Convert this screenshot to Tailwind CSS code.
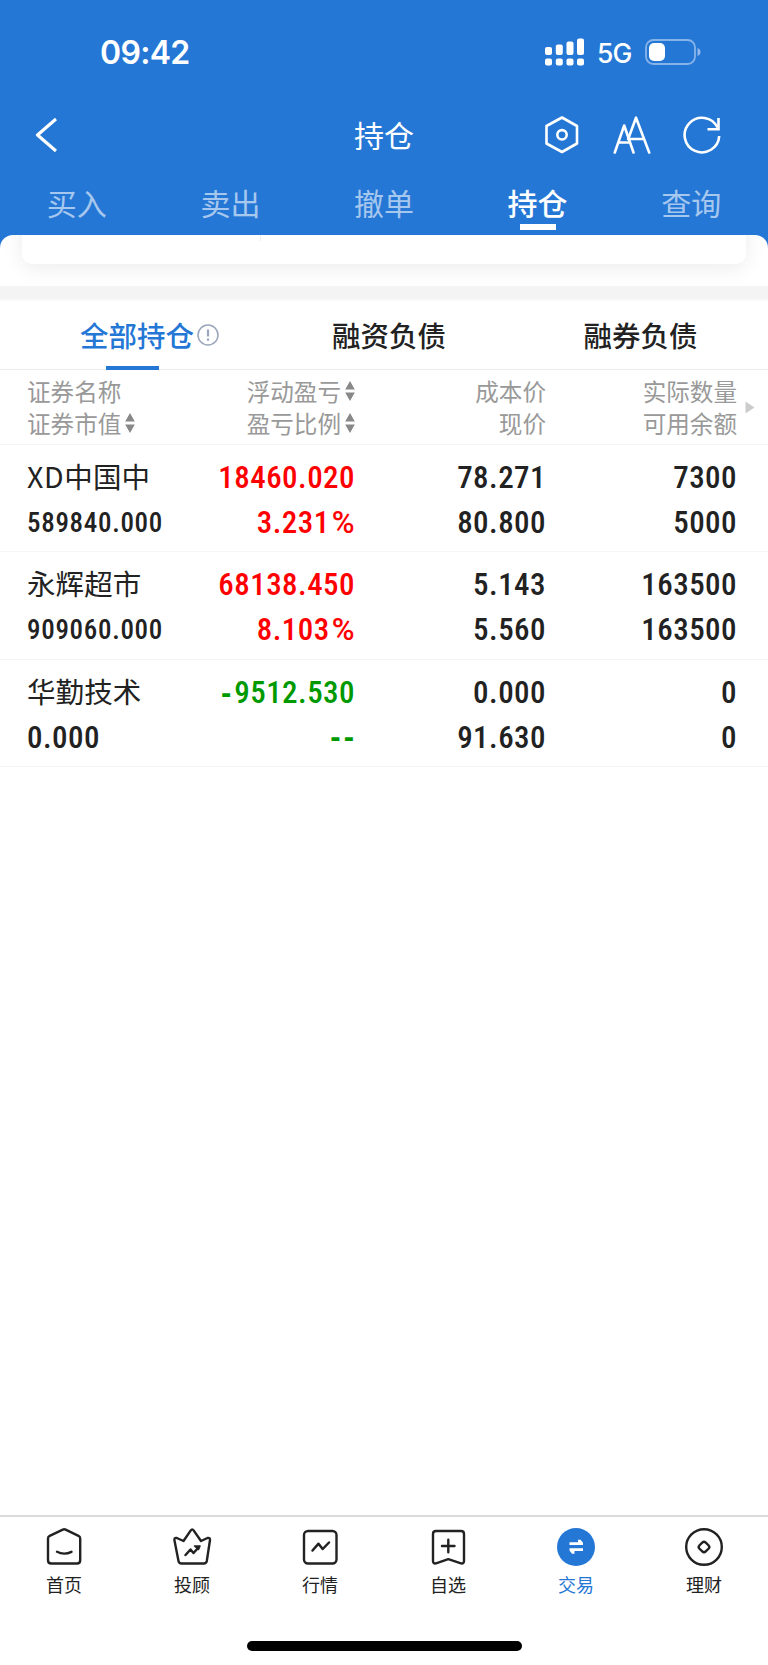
<!DOCTYPE html>
<html lang="zh-CN">
<head>
  <meta charset="UTF-8">
  <meta name="viewport" content="width=device-width, initial-scale=1.0">
  <title>持仓</title>
  <script src="https://cdn.jsdelivr.net/npm/@tailwindcss/browser@4"></script>
</head>
<body class="bg-[#2577d6] font-['Noto_Sans_CJK_SC',sans-serif] text-[#222]">
<div class="w-[768px] h-[1665px] flex flex-col overflow-hidden">

  <!-- Header -->
  <header class="h-[235px] shrink-0 text-white flex flex-col">
    <div class="h-[104px] shrink-0 pt-px pl-[100px] pr-[67px] flex items-center justify-between font-[Inter,sans-serif]">
      <span class="text-[32px] leading-none font-semibold tracking-[-0.7px]">09:42</span>
      <div class="-mt-[2px] flex items-center">
        <svg class="w-[39px] h-[28px]" viewBox="0 0 39 28" fill="currentColor">
          <rect x="0" y="9" width="7" height="8" rx="2"/>
          <rect x="10.8" y="6.5" width="7" height="10.5" rx="2"/>
          <rect x="21.5" y="3.5" width="7" height="13.5" rx="2"/>
          <rect x="32" y="0.5" width="7" height="16.5" rx="2"/>
          <rect x="0" y="20.5" width="7" height="7" rx="2"/>
          <rect x="10.8" y="20.5" width="7" height="7" rx="2"/>
          <rect x="21.5" y="20.5" width="7" height="7" rx="2"/>
          <rect x="32" y="20.5" width="7" height="7" rx="2"/>
        </svg>
        <span class="ml-[13px] w-[35px] pt-[3px] text-[26.5px] leading-none font-medium tracking-[-1px] whitespace-nowrap">5G</span>
        <svg class="ml-[13px] w-[56px] h-[26px]" viewBox="0 0 56 26" fill="none">
          <rect x="1" y="1" width="49" height="24" rx="7.5" stroke="#fff" stroke-opacity=".45" stroke-width="1.8"/>
          <rect x="4" y="4" width="16" height="18" rx="5" fill="#fff"/>
          <path d="M52.5 9q3 1.200 3 4t-3 4z" fill="#fff" fill-opacity=".5"/>
        </svg>
      </div>
    </div>

    <div class="h-[62px] shrink-0 px-[35px] grid grid-cols-[1fr_auto_1fr] items-center">
      <svg class="w-[22px] h-[36px]" viewBox="0 0 22 36" fill="none" stroke="#fff" stroke-width="3.2" stroke-linejoin="round"><path d="M21 2L2.500 18 21 34"/></svg>
      <h1 class="-mt-[2px] text-[30px] leading-none">持仓</h1>
      <div class="flex items-center justify-end pr-[12px]">
        <svg class="w-[34px] h-[38px]" viewBox="0 0 34 38" fill="none" stroke="#fff" stroke-width="2.600" stroke-linejoin="round">
          <path d="M17 1.500L32 10v17.500L17 36 1.500 27.500V10z"/>
          <circle cx="17" cy="18.800" r="4.700"/>
        </svg>
        <svg class="ml-[34px] w-[38px] h-[38px]" viewBox="0 0 38 38" fill="none" stroke="#fff" stroke-width="2.600" stroke-linecap="round" stroke-linejoin="round">
          <path d="M1.800 36.500L11.200 9.500l9.300 27M5.500 26.500h11.600"/>
          <path d="M15.200 23L23 1.700 36.200 36.500M16.600 23h14"/>
        </svg>
        <svg class="ml-[32px] w-[38px] h-[38px]" viewBox="0 0 38 38" fill="none" stroke="#fff" stroke-width="2.600">
          <path d="M36.200 20A17.300 17.300 0 1 1 34.500 11.500"/>
          <path d="M35.500 2v11.200H24.500"/>
        </svg>
      </div>
    </div>

    <nav class="h-[69px] shrink-0 grid grid-cols-5 text-center text-[30px] leading-[73px] text-white/60">
      <a>买入</a>
      <a>卖出</a>
      <a>撤单</a>
      <a class="relative text-white font-medium">持仓<span class="absolute left-[59px] top-[58px] w-9 h-[6px] bg-white"></span></a>
      <a>查询</a>
    </nav>
  </header>

  <main class="flex-1 bg-white rounded-t-[13px] overflow-hidden flex flex-col">
    <!-- Lower edge of the scrolled summary card -->
    <div class="h-[51px] shrink-0 px-[22px] overflow-hidden">
      <div class="-mt-[40px] h-[69px] rounded-[10px] bg-white shadow-[0_4px_20px_rgba(0,0,0,0.08)] pl-[238px]">
        <div class="w-px h-[46px] bg-[#eee]"></div>
      </div>
    </div>
    <div class="h-[15px] shrink-0 bg-[#f4f4f4] border-b-2 border-[#f9f9f9]"></div>

    <!-- Position tabs -->
    <div class="h-[69px] shrink-0 flex border-b border-[#ececec] text-[28.5px] leading-[67px] font-medium">
      <div class="relative w-[264px] pl-[80px] pb-px flex items-center text-[#2577d6]">
        全部持仓
        <svg class="ml-[3px] w-[22px] h-[22px]" viewBox="0 0 22 22" fill="none" stroke="#9aa4bb">
          <circle cx="11" cy="11" r="10" stroke-width="1.500"/>
          <path d="M11 5.500v7M11 14.500v2.200" stroke-width="2.200"/>
        </svg>
        <span class="absolute left-[106px] bottom-[-1px] w-[53px] h-[4px] bg-[#2577d6]"></span>
      </div>
      <div class="w-[250px] text-center">融资负债</div>
      <div class="w-[253px] text-center">融券负债</div>
    </div>

    <!-- Column titles -->
    <div class="relative h-[75px] shrink-0 pl-[27px] pt-[5px] flex border-b border-[#f5f5f5] text-[23.6px] leading-[32px] text-[#999]">
      <div class="w-[150px]">
        <div>证券名称</div>
        <div class="flex items-center gap-[4px]">证券市值
          <svg class="w-[10px] h-[20px]" viewBox="0 0 10 20" fill="#888"><path d="M5 0l4.800 8.500H.2zM5 20L.2 11.500h9.600z"/></svg>
        </div>
      </div>
      <div class="w-[178px]">
        <div class="flex items-center justify-end gap-[4px]">浮动盈亏
          <svg class="w-[10px] h-[20px]" viewBox="0 0 10 20" fill="#888"><path d="M5 0l4.800 8.500H.2zM5 20L.2 11.500h9.600z"/></svg>
        </div>
        <div class="flex items-center justify-end gap-[4px]">盈亏比例
          <svg class="w-[10px] h-[20px]" viewBox="0 0 10 20" fill="#888"><path d="M5 0l4.800 8.500H.2zM5 20L.2 11.500h9.600z"/></svg>
        </div>
      </div>
      <div class="w-[191px] text-right">
        <div>成本价</div>
        <div>现价</div>
      </div>
      <div class="w-[191px] text-right">
        <div>实际数量</div>
        <div>可用余额</div>
      </div>
      <svg class="absolute left-[745px] top-[31px] w-[10px] h-[13px]" viewBox="0 0 10 13" fill="#ccc"><path d="M.5.500l9 6-9 6z"/></svg>
    </div>

    <!-- Positions -->
    <div class="flex-1 font-[Roboto,'Noto_Sans_CJK_SC',sans-serif] font-medium [font-stretch:75%] text-[31px] tracking-[0.45px] leading-[45px]">
      <div class="h-[107.250px] pl-[27px] pt-[10px] flex border-b border-[#f5f5f5]">
        <div class="w-[150px] whitespace-nowrap">
          <div class="-mt-[2px] mb-[2px] font-['Noto_Sans_CJK_SC',sans-serif] font-normal text-[28.5px] tracking-[0.1px]"><span class="tracking-[0.7px]">XD</span>中国中</div>
          <div class="pt-px h-[45px] text-[27px] tracking-[0.7px]">589840.000</div>
        </div>
        <div class="w-[178px] text-right text-[#f00]">
          <div>18460.020</div>
          <div>3.231<span class="ml-[2px] [font-stretch:100%]">%</span></div>
        </div>
        <div class="w-[191px] text-right">
          <div>78.271</div>
          <div>80.800</div>
        </div>
        <div class="w-[191px] text-right">
          <div>7300</div>
          <div>5000</div>
        </div>
      </div>
      <div class="h-[107.250px] pl-[27px] pt-[10px] flex border-b border-[#f5f5f5]">
        <div class="w-[150px] whitespace-nowrap">
          <div class="-mt-[2px] mb-[2px] font-['Noto_Sans_CJK_SC',sans-serif] font-normal text-[28.5px] tracking-[0.1px]">永辉超市</div>
          <div class="pt-px h-[45px] text-[27px] tracking-[0.7px]">909060.000</div>
        </div>
        <div class="w-[178px] text-right text-[#f00]">
          <div>68138.450</div>
          <div>8.103<span class="ml-[2px] [font-stretch:100%]">%</span></div>
        </div>
        <div class="w-[191px] text-right">
          <div>5.143</div>
          <div>5.560</div>
        </div>
        <div class="w-[191px] text-right">
          <div>163500</div>
          <div>163500</div>
        </div>
      </div>
      <div class="h-[107.250px] pl-[27px] pt-[10px] flex border-b border-[#f5f5f5]">
        <div class="w-[150px] whitespace-nowrap">
          <div class="-mt-[2px] mb-[2px] font-['Noto_Sans_CJK_SC',sans-serif] font-normal text-[28.5px] tracking-[0.1px]">华勤技术</div>
          <div>0.000</div>
        </div>
        <div class="w-[178px] text-right text-[#090]">
          <div class="h-[45px]"><span class="font-['Liberation_Sans',sans-serif] font-bold tracking-[3px]">-</span>9512.530</div>
          <div class="h-[45px] font-['Liberation_Sans',sans-serif] font-bold tracking-[3px] -mr-[2px] -mt-px">--</div>
        </div>
        <div class="w-[191px] text-right">
          <div>0.000</div>
          <div>91.630</div>
        </div>
        <div class="w-[191px] text-right">
          <div>0</div>
          <div>0</div>
        </div>
      </div>
    </div>

    <!-- Bottom nav -->
    <footer class="h-[150px] shrink-0 border-t-2 border-[#d9dada] flex flex-col items-center">
      <nav class="w-full grid grid-cols-6 pt-[10px] text-[18px] leading-[34px]">
        <a class="flex flex-col items-center">
          <svg class="w-[40px] h-[40px]" viewBox="0 0 40 40" fill="none" stroke="#222" stroke-width="2.400" stroke-linecap="round" stroke-linejoin="round">
            <path d="M18.800 2.600q1.400-.700 2.800 0L34.500 8.800q1.700.9 1.700 2.700v21.700q0 3.300-3.300 3.300H7.300Q4 36.500 4 33.200V11.500q0-1.800 1.700-2.700z"/>
            <path d="M13 24.800q7 3.600 14.500 0"/>
          </svg>
          首页
        </a>
        <a class="flex flex-col items-center">
          <svg class="w-[40px] h-[40px]" viewBox="0 0 40 40" fill="none" stroke="#222" stroke-width="2.400" stroke-linecap="round" stroke-linejoin="round">
            <path d="M18.800 3.400q1.400-2 2.800 0L29 14l6.500-3q2.700-.6 2.500 2l-3.200 21q-.5 2.500-3 2.500H9.500q-2.500 0-3-2.500L2.400 13q-.2-2.600 2.400-2L11.500 14z"/>
            <path d="M13.500 28l5-5.500 3 3.500 5.500-6" stroke-width="2.500"/>
            <path d="M22.500 19h5.500l-1.500 3.500z" fill="#222" stroke-width="1.500"/>
          </svg>
          投顾
        </a>
        <a class="flex flex-col items-center">
          <svg class="w-[40px] h-[40px]" viewBox="0 0 40 40" fill="none" stroke="#222" stroke-width="2.400" stroke-linecap="round" stroke-linejoin="round">
            <rect x="4" y="4" width="32.500" height="32.500" rx="4"/>
            <path d="M12.500 23.500l6-6.800 4.200 5.300 6.300-6.500" stroke-width="2.500"/>
          </svg>
          行情
        </a>
        <a class="flex flex-col items-center">
          <svg class="w-[40px] h-[40px]" viewBox="0 0 40 40" fill="none" stroke="#222" stroke-width="2.400" stroke-linecap="round" stroke-linejoin="round">
            <path d="M8 4h25q3 0 3 3v27q0 3-3 2.300L20.300 32.200 8 36.300q-3 .7-3-2.300V7q0-3 3-3z"/>
            <path d="M20.300 12.800v12.500M14 19h12.500"/>
          </svg>
          自选
        </a>
        <a class="flex flex-col items-center text-[#2577d6]">
          <svg class="w-[40px] h-[40px]" viewBox="0 0 40 40">
            <circle cx="20" cy="20" r="19" fill="#2577d6"/>
            <path d="M13.500 15.300h8.500v-2.500h2.500l2.500 3v2.200H13.500zM27 21.300H13.500v2.200l2.500 3.300h2.500v-2.800H27z" fill="#fff"/>
          </svg>
          交易
        </a>
        <a class="flex flex-col items-center">
          <svg class="w-[40px] h-[40px]" viewBox="0 0 40 40" fill="none" stroke="#222" stroke-width="2.400" stroke-linejoin="round">
            <circle cx="20" cy="20" r="17.800"/>
            <rect x="15.600" y="15.600" width="8.800" height="8.800" rx="2.500" transform="rotate(45 20 20)"/>
          </svg>
          理财
        </a>
      </nav>
      <div class="mt-auto mb-[14px] w-[275px] h-[10px] rounded-full bg-black"></div>
    </footer>
  </main>

</div>
</body>
</html>
